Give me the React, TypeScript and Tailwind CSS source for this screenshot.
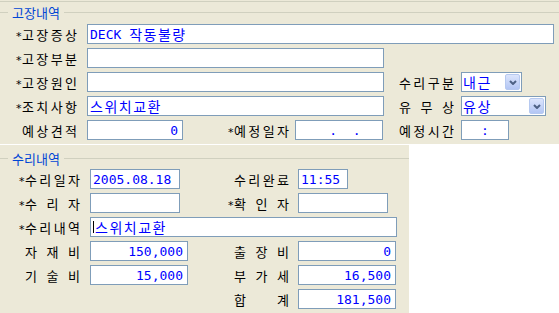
import React from "react";

const isHangul = (c: string) => /[\u1100-\u11FF\u3130-\u318F\uAC00-\uD7AF]/.test(c);

function Mixed({ text }: { text: string }) {
  const runs: { h: boolean; s: string }[] = [];
  for (const ch of text) {
    const h = isHangul(ch);
    const last = runs[runs.length - 1];
    if (last && last.h === h) last.s += ch;
    else runs.push({ h, s: ch });
  }
  return (
    <>
      {runs.map((r, i) =>
        r.h ? (
          <span key={i} className="text-[14px] tracking-[1.5px] font-['Noto_Sans_CJK_KR',sans-serif]">
            {r.s}
          </span>
        ) : (
          <span key={i}>{r.s}</span>
        )
      )}
    </>
  );
}

function Field({
  w,
  value = "",
  align = "left",
  caret = false,
  ml = "",
}: {
  w: string;
  value?: string;
  align?: "left" | "right" | "center";
  caret?: boolean;
  ml?: string;
}) {
  const al = align === "right" ? "justify-end pr-[4px]" : align === "center" ? "justify-center" : "justify-start pl-[2px]";
  return (
    <div
      className={`${w} ${ml} ${al} h-[20px] shrink-0 border border-[#7F9DB9] bg-white flex items-center overflow-hidden whitespace-pre text-[#0000FF] text-[13px] leading-none font-['DejaVu_Sans_Mono','Noto_Sans_CJK_KR',monospace]`}
    >
      {caret && <span className="w-px h-[12px] bg-black mr-[1px]" />}
      <Mixed text={value} />
    </div>
  );
}

function Label({ text, star = false, w, ml = "" }: { text: string; star?: boolean; w: string; ml?: string }) {
  const chars = [...text].filter((c) => c !== " ");
  return (
    <div
      className={`${w} ${ml} shrink-0 flex justify-end items-center font-['Noto_Sans_CJK_KR',sans-serif] text-[13px] leading-none text-black`}
    >
      {star && (
        <span className="w-[6px] text-[11px] translate-y-[2px] font-['DejaVu_Sans',sans-serif]">*</span>
      )}
      <span className="flex w-[55px] justify-between">
        {chars.map((c, i) => (
          <span key={i}>{c}</span>
        ))}
      </span>
    </div>
  );
}

function Select({ w, value, ml = "" }: { w: string; value: string; ml?: string }) {
  return (
    <div className={`${w} ${ml} h-[20px] shrink-0 border border-[#7F9DB9] bg-white flex items-center pl-[1px] pr-[1px]`}>
      <span className="flex-1 text-[#0000FF] leading-none">
        <Mixed text={value} />
      </span>
      <span className="w-[15px] h-[16px] rounded-[2px] border border-[#B6C9F0] bg-gradient-to-b from-[#DCE5FC] to-[#B3C6F4] flex items-center justify-center">
        <svg width="8" height="5" viewBox="0 0 8 5">
          <path d="M1 1 L4 4 L7 1" fill="none" stroke="#4D6185" strokeWidth="2" />
        </svg>
      </span>
    </div>
  );
}

function Legend({ text }: { text: string }) {
  return (
    <div className="flex items-center h-[20px]">
      <div className="w-[8px] h-px bg-[#D0D0BF]" />
      <span className="mx-[4px] text-[13px] leading-none text-[#0046D5] font-['Noto_Sans_CJK_KR',sans-serif]">
        {text}
      </span>
      <div className="flex-1 h-px bg-[#D0D0BF]" />
    </div>
  );
}

export default function App() {
  return (
    <div className="w-[559px] h-[313px] bg-white overflow-hidden">
      <div className="h-[144px] bg-[#ECE9D8] pt-[1px]">
        <div className="h-px bg-[#D0D0BF]" />
        <div className="mb-[2px]">
          <Legend text="고장내역" />
        </div>
        <div className="flex flex-col gap-[4px]">
          <div className="flex items-center h-[20px]">
            <Label w="w-[77px]" star text="고장증상" />
            <Field ml="ml-[10px]" w="w-[467px]" value="DECK 작동불량" />
          </div>
          <div className="flex items-center h-[20px]">
            <Label w="w-[77px]" star text="고장부분" />
            <Field ml="ml-[10px]" w="w-[297px]" />
          </div>
          <div className="flex items-center h-[20px]">
            <Label w="w-[77px]" star text="고장원인" />
            <Field ml="ml-[10px]" w="w-[297px]" />
            <Label ml="ml-[15px]" w="w-[55px]" text="수리구분" />
            <Select ml="ml-[7px]" w="w-[61px]" value="내근" />
          </div>
          <div className="flex items-center h-[20px]">
            <Label w="w-[77px]" star text="조치사항" />
            <Field ml="ml-[10px]" w="w-[297px]" value="스위치교환" />
            <Label ml="ml-[15px]" w="w-[55px]" text="유 무 상" />
            <Select ml="ml-[7px]" w="w-[85px]" value="유상" />
          </div>
          <div className="flex items-center h-[20px]">
            <Label w="w-[77px]" text="예상견적" />
            <Field ml="ml-[10px]" w="w-[96px]" align="right" value="0" />
            <Label w="w-[106px]" star text="예정일자" />
            <Field ml="ml-[6px]" w="w-[88px]" value="    .  ." />
            <Label ml="ml-[16px]" w="w-[55px]" text="예정시간" />
            <Field ml="ml-[7px]" w="w-[48px]" align="center" value=":" />
          </div>
        </div>
      </div>
      <div className="h-px bg-white" />
      <div className="w-[409px] h-[168px] bg-[#ECE9D8] pt-[3px]">
        <div className="mb-[1px]">
          <Legend text="수리내역" />
        </div>
        <div className="flex flex-col gap-[4px]">
          <div className="flex items-center h-[20px]">
            <Label w="w-[80px]" star text="수리일자" />
            <Field ml="ml-[10px]" w="w-[90px]" value="2005.08.18" />
            <Label w="w-[109px]" text="수리완료" />
            <Field ml="ml-[9px]" w="w-[50px]" value="11:55" />
          </div>
          <div className="flex items-center h-[20px]">
            <Label w="w-[80px]" star text="수 리 자" />
            <Field ml="ml-[10px]" w="w-[90px]" />
            <Label w="w-[109px]" star text="확 인 자" />
            <Field ml="ml-[9px]" w="w-[90px]" />
          </div>
          <div className="flex items-center h-[20px]">
            <Label w="w-[80px]" star text="수리내역" />
            <Field ml="ml-[10px]" w="w-[307px]" value="스위치교환" caret />
          </div>
          <div className="flex items-center h-[20px]">
            <Label w="w-[80px]" text="자 재 비" />
            <Field ml="ml-[10px]" w="w-[98px]" align="right" value="150,000" />
            <Label w="w-[101px]" text="출 장 비" />
            <Field ml="ml-[9px]" w="w-[98px]" align="right" value="0" />
          </div>
          <div className="flex items-center h-[20px]">
            <Label w="w-[80px]" text="기 술 비" />
            <Field ml="ml-[10px]" w="w-[98px]" align="right" value="15,000" />
            <Label w="w-[101px]" text="부 가 세" />
            <Field ml="ml-[9px]" w="w-[98px]" align="right" value="16,500" />
          </div>
          <div className="flex items-center h-[20px]">
            <div className="w-[188px] shrink-0" />
            <Label w="w-[101px]" text="합 계" />
            <Field ml="ml-[9px]" w="w-[98px]" align="right" value="181,500" />
          </div>
        </div>
      </div>
    </div>
  );
}
